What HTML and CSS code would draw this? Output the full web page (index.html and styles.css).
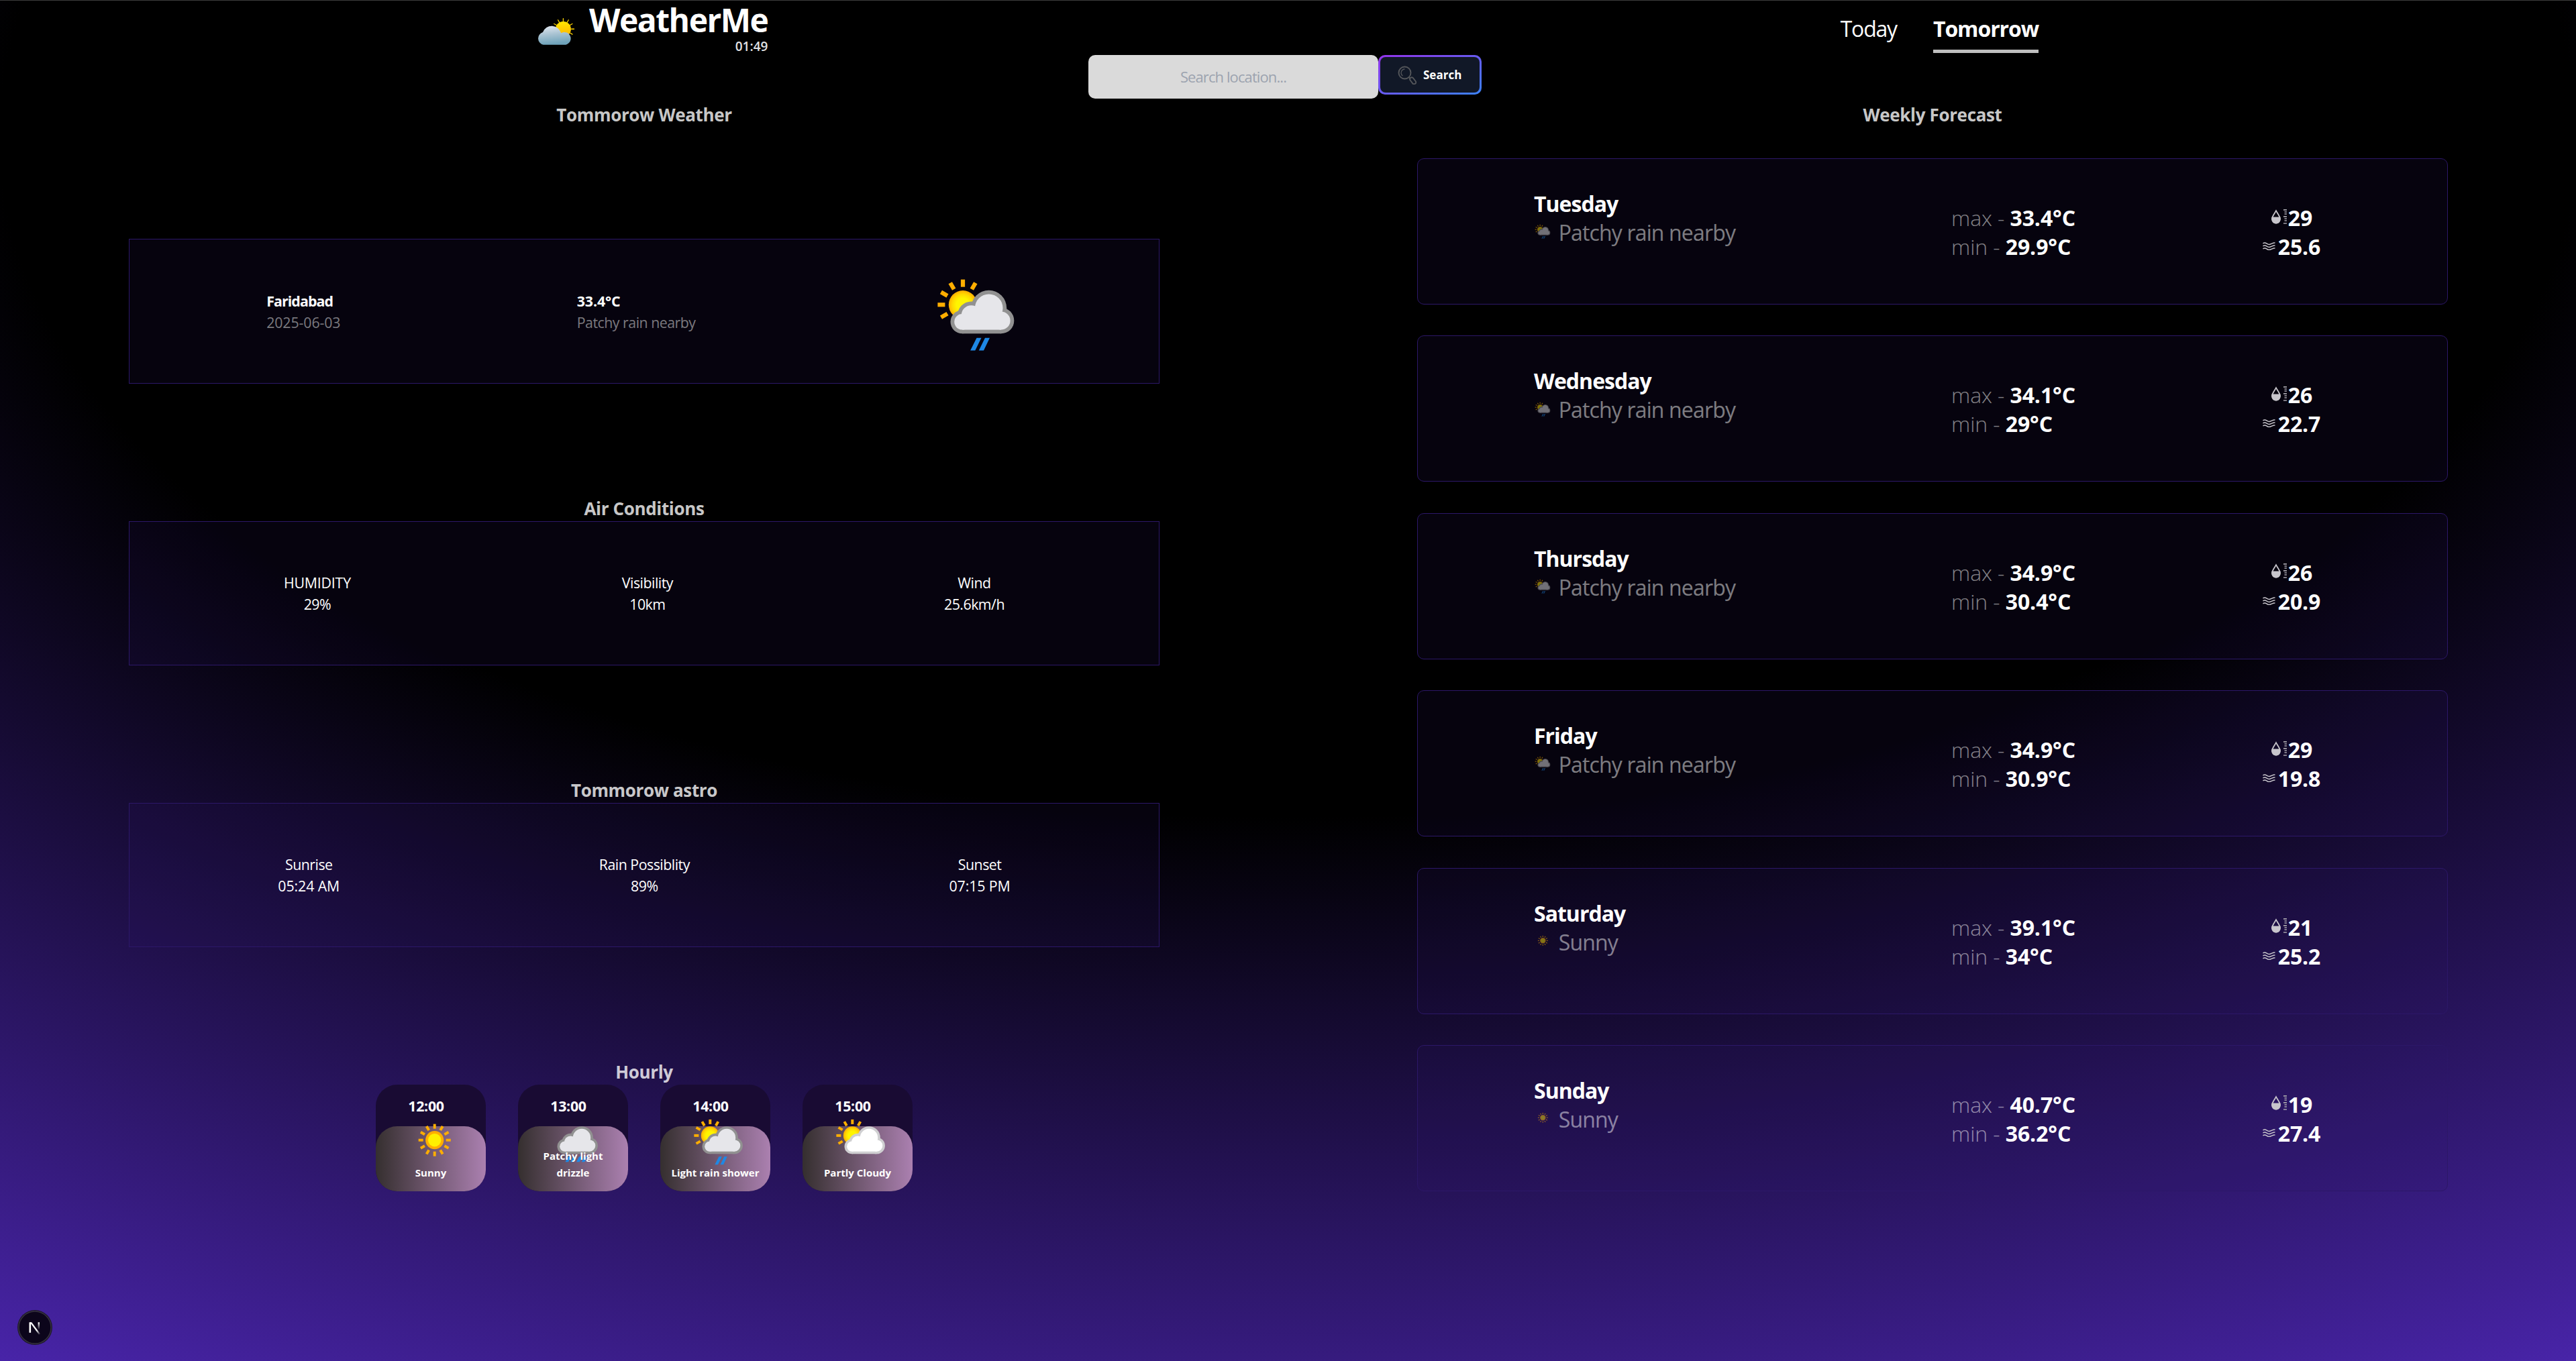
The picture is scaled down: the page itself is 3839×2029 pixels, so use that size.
FILE: index.html
```html
<!DOCTYPE html>
<html lang="en">
<head>
<meta charset="utf-8">
<title>WeatherMe</title>
<link rel="stylesheet" href="styles.css">
</head>
<body>
<svg class="defs" width="0" height="0" aria-hidden="true">
  <defs>
    <radialGradient id="sunFill"><stop offset="0.45" stop-color="#fff500"/><stop offset="0.75" stop-color="#ffd800"/><stop offset="1" stop-color="#ffae00"/></radialGradient>
    <linearGradient id="logoCloud" x1="0" y1="0" x2="0.2" y2="1"><stop offset="0" stop-color="#e6ebf3"/><stop offset="0.5" stop-color="#a9c3d2"/><stop offset="1" stop-color="#6fa3ba"/></linearGradient>
    <linearGradient id="logoSun" x1="0.5" y1="0" x2="0.6" y2="1"><stop offset="0" stop-color="#ffe600"/><stop offset="1" stop-color="#ffb300"/></linearGradient>
    <linearGradient id="nFade" x1="0" y1="0" x2="0" y2="1"><stop offset="0" stop-color="#fff"/><stop offset="1" stop-color="#fff" stop-opacity="0"/></linearGradient>
    <linearGradient id="nDiag" gradientUnits="userSpaceOnUse" x1="20" y1="20" x2="34" y2="37"><stop offset="0.6" stop-color="#fff"/><stop offset="1" stop-color="#fff" stop-opacity="0"/></linearGradient>
    <symbol id="peekingSun" viewBox="0 0 134 134">
      <g fill="#ffae00">
        <rect id="ray" x="42.9" y="18.7" width="6.2" height="11"/>
        <use href="#ray" transform="rotate(30 46 56.3)"/>
        <use href="#ray" transform="rotate(-30 46 56.3)"/>
        <use href="#ray" transform="rotate(-60 46 56.3)"/>
        <use href="#ray" transform="rotate(-90 46 56.3)"/>
        <use href="#ray" transform="rotate(-120 46 56.3)"/>
      </g>
      <circle cx="46" cy="56.3" r="21.2" fill="url(#sunFill)"/>
    </symbol>
    <symbol id="cloudEdge" viewBox="0 0 134 134">
      <circle cx="84.7" cy="61.3" r="26.5"/><circle cx="103" cy="80" r="19.3"/><circle cx="45" cy="81.8" r="17.5"/><circle cx="58.5" cy="72" r="20.5"/><rect x="45" y="62" width="58" height="37.3"/>
    </symbol>
    <symbol id="cloudCore" viewBox="0 0 134 134">
      <circle cx="84.7" cy="61.3" r="20.8"/><circle cx="103" cy="80" r="13.6"/><circle cx="45" cy="81.8" r="11.8"/><circle cx="58.5" cy="72" r="14.8"/><rect x="45" y="68" width="58" height="25.6"/>
    </symbol>
    <symbol id="sunRain" viewBox="0 0 134 134">
      <use href="#peekingSun"/>
      <use href="#cloudEdge" fill="#919191"/><use href="#cloudCore" fill="#e6e6ea"/>
      <path fill="#1e88e5" d="M66.5 105.7h7L64.3 124.5h-7.2zM79 105.7h7L77 124.5h-7.2z"/>
    </symbol>
    <symbol id="partly" viewBox="0 0 134 134">
      <use href="#peekingSun"/>
      <use href="#cloudEdge" fill="#cfcfd1"/><use href="#cloudCore" fill="#fff"/>
    </symbol>
    <symbol id="drizzle" viewBox="0 0 134 134">
      <use href="#cloudEdge" fill="#919191"/><use href="#cloudCore" fill="#e6e6ea"/>
      <path fill="#1e88e5" d="M52.500 105.700h7l-6 12.300h-7.200zM64.500 105.700h7l-6 12.300h-7.200zM78.500 105.700h7l-6 12.300h-7.200zM90.500 105.700h7l-6 12.300h-7.200z"/>
    </symbol>
    <symbol id="sunny" viewBox="0 0 134 134">
      <g fill="#ffae00">
        <rect id="ray2" x="63.900" y="29.300" width="6.200" height="11"/>
        <use href="#ray2" transform="rotate(30 67 67)"/><use href="#ray2" transform="rotate(60 67 67)"/>
        <use href="#ray2" transform="rotate(90 67 67)"/><use href="#ray2" transform="rotate(120 67 67)"/>
        <use href="#ray2" transform="rotate(150 67 67)"/><use href="#ray2" transform="rotate(180 67 67)"/>
        <use href="#ray2" transform="rotate(210 67 67)"/><use href="#ray2" transform="rotate(240 67 67)"/>
        <use href="#ray2" transform="rotate(270 67 67)"/><use href="#ray2" transform="rotate(300 67 67)"/>
        <use href="#ray2" transform="rotate(330 67 67)"/>
        <circle cx="67" cy="67" r="21.300"/>
      </g>
      <circle cx="67" cy="67" r="15.200" fill="#fff000"/>
    </symbol>
    <symbol id="humidity" viewBox="0 0 26 24">
      <path d="M8 3.200C10 7 14 11.500 14 15.500a6 6 0 0 1-12 0C2 11.500 6 7 8 3.200z" fill="none" stroke="#c8c6cc" stroke-width="1.800"/>
      <path d="M1.600 12.500h12.800c1 6-2 10-6.400 10s-7.400-4-6.400-10z" fill="#c8c6cc"/>
      <path d="M19 1.800h5M20.500 5h3.500M20.500 8h3.500M19 11.800h5M20.500 15h3.500M20.500 18h3.500M19 22h5" stroke="#a5a3aa" stroke-width="1.700"/>
    </symbol>
    <symbol id="wind" viewBox="0 0 19 13">
      <path d="M.5 3c4-3.500 6 2.200 9.500 1.500S15.500 1.500 18.500 2M.5 7c4-3.500 6 2.200 9.500 1.500S15.500 5.500 18.500 6M.5 11c4-3.500 6 2.200 9.500 1.500S15.500 9.500 18.500 10" fill="none" stroke="#c8c6cc" stroke-width="1.500"/>
    </symbol>
  </defs>
</svg>

<div class="page">
  <header class="header">
    <div class="brand">
      <svg class="logo" viewBox="0 0 55 39">
        <g stroke="#ffd500" stroke-width="1.300" stroke-linecap="round">
          <path d="M38.700.5v4M31 2.600l2 3.500M46.400 2.600l-2 3.500M52 8.200l-3.500 2M50.700 15.800h4M52 23.500l-3.500-2M25.300 8.200l3.500 2"/>
        </g>
        <circle cx="38.700" cy="16" r="11.300" fill="url(#logoSun)"/>
        <path d="M9.500 39A9.500 9.500 0 0 1 8.800 20.600 14 14 0 0 1 35.500 21.800 9.300 9.300 0 1 1 40 39z" fill="url(#logoCloud)"/>
      </svg>
      <div class="brand-text">
        <h1 class="brand-name">WeatherMe</h1>
        <div class="clock">01:49</div>
      </div>
    </div>
    <nav class="nav">
      <a class="nav-link">Today</a>
      <a class="nav-link active">Tomorrow</a>
    </nav>
  </header>

  <form class="search">
    <input class="search-input" type="text" placeholder="Search location...">
    <button class="search-button" type="button">
      <span class="search-inner">
        <svg class="search-icon" viewBox="0 0 28 28" fill="none" stroke="#54565a">
          <circle cx="10.500" cy="10.500" r="9" stroke-width="1.900"/>
          <path d="M10.500 5a5.500 5.500 0 0 0-3 10" stroke-width="1.300"/>
          <path d="M16.500 17l2 2" stroke-width="2"/>
          <rect x="-2.500" y="-5.500" width="5.400" height="11" rx="2.600" transform="translate(22.500 22.500) rotate(-38)" stroke-width="1.900"/>
        </svg>
        Search
      </span>
    </button>
  </form>

  <main class="main">
    <section class="column">
      <h2 class="heading">Tommorow Weather</h2>
      <div class="panel panel-first">
        <div>
          <p class="strong">Faridabad</p>
          <p class="muted digits">2025-06-03</p>
        </div>
        <div>
          <p class="strong digits">33.4°C</p>
          <p class="muted">Patchy rain nearby</p>
        </div>
        <svg class="icon-large"><use href="#sunRain"/></svg>
      </div>

      <h2 class="heading heading-gap">Air Conditions</h2>
      <div class="panel centered">
        <div><p class="caps">HUMIDITY</p><p>29%</p></div>
        <div><p>Visibility</p><p>10km</p></div>
        <div><p>Wind</p><p>25.6km/h</p></div>
      </div>

      <h2 class="heading heading-gap">Tommorow astro</h2>
      <div class="panel centered">
        <div><p>Sunrise</p><p class="digits">05:24 AM</p></div>
        <div><p>Rain Possiblity</p><p>89%</p></div>
        <div><p>Sunset</p><p class="digits">07:15 PM</p></div>
      </div>

      <h2 class="heading heading-gap">Hourly</h2>
      <div class="hours">
        <div class="hour"><div class="hour-time">12:00</div><svg class="hour-icon"><use href="#sunny"/></svg><div class="hour-text"><span>Sunny</span></div></div>
        <div class="hour"><div class="hour-time">13:00</div><svg class="hour-icon hour-icon-wide"><use href="#drizzle"/></svg><div class="hour-text"><span>Patchy light drizzle</span></div></div>
        <div class="hour"><div class="hour-time">14:00</div><svg class="hour-icon"><use href="#sunRain"/></svg><div class="hour-text"><span>Light rain shower</span></div></div>
        <div class="hour"><div class="hour-time">15:00</div><svg class="hour-icon"><use href="#partly"/></svg><div class="hour-text"><span>Partly Cloudy</span></div></div>
      </div>
    </section>

    <section class="column">
      <h2 class="heading">Weekly Forecast</h2>
      <div class="week">
        <article class="day">
          <div class="day-info"><h3>Tuesday</h3><p class="day-text"><svg><use href="#sunRain"/></svg>Patchy rain nearby</p></div>
          <div class="day-temps"><p><span class="label">max - </span><b>33.4°C</b></p><p><span class="label">min - </span><b>29.9°C</b></p></div>
          <div class="day-side"><p><svg class="drop"><use href="#humidity"/></svg><b>29</b></p><p><svg class="waves"><use href="#wind"/></svg><b>25.6</b></p></div>
        </article>
        <article class="day">
          <div class="day-info"><h3>Wednesday</h3><p class="day-text"><svg><use href="#sunRain"/></svg>Patchy rain nearby</p></div>
          <div class="day-temps"><p><span class="label">max - </span><b>34.1°C</b></p><p><span class="label">min - </span><b>29°C</b></p></div>
          <div class="day-side"><p><svg class="drop"><use href="#humidity"/></svg><b>26</b></p><p><svg class="waves"><use href="#wind"/></svg><b>22.7</b></p></div>
        </article>
        <article class="day">
          <div class="day-info"><h3>Thursday</h3><p class="day-text"><svg><use href="#sunRain"/></svg>Patchy rain nearby</p></div>
          <div class="day-temps"><p><span class="label">max - </span><b>34.9°C</b></p><p><span class="label">min - </span><b>30.4°C</b></p></div>
          <div class="day-side"><p><svg class="drop"><use href="#humidity"/></svg><b>26</b></p><p><svg class="waves"><use href="#wind"/></svg><b>20.9</b></p></div>
        </article>
        <article class="day">
          <div class="day-info"><h3>Friday</h3><p class="day-text"><svg><use href="#sunRain"/></svg>Patchy rain nearby</p></div>
          <div class="day-temps"><p><span class="label">max - </span><b>34.9°C</b></p><p><span class="label">min - </span><b>30.9°C</b></p></div>
          <div class="day-side"><p><svg class="drop"><use href="#humidity"/></svg><b>29</b></p><p><svg class="waves"><use href="#wind"/></svg><b>19.8</b></p></div>
        </article>
        <article class="day">
          <div class="day-info"><h3>Saturday</h3><p class="day-text"><svg><use href="#sunny"/></svg>Sunny</p></div>
          <div class="day-temps"><p><span class="label">max - </span><b>39.1°C</b></p><p><span class="label">min - </span><b>34°C</b></p></div>
          <div class="day-side"><p><svg class="drop"><use href="#humidity"/></svg><b>21</b></p><p><svg class="waves"><use href="#wind"/></svg><b>25.2</b></p></div>
        </article>
        <article class="day">
          <div class="day-info"><h3>Sunday</h3><p class="day-text"><svg><use href="#sunny"/></svg>Sunny</p></div>
          <div class="day-temps"><p><span class="label">max - </span><b>40.7°C</b></p><p><span class="label">min - </span><b>36.2°C</b></p></div>
          <div class="day-side"><p><svg class="drop"><use href="#humidity"/></svg><b>19</b></p><p><svg class="waves"><use href="#wind"/></svg><b>27.4</b></p></div>
        </article>
      </div>
    </section>
  </main>
</div>

<svg class="dev-badge" viewBox="0 0 52 52">
  <circle cx="26" cy="26" r="26" fill="#1f1a2a"/>
  <circle cx="26" cy="26" r="24" fill="#0c051b" stroke="#35303f" stroke-width="1.500"/>
  <rect x="17.500" y="18.300" width="2.600" height="15.500" fill="#fff"/>
  <path d="M18.500 18.300h2.700L34 35.500l-2 1.300z" fill="url(#nDiag)"/>
  <rect x="30.600" y="18.300" width="2.400" height="11" fill="url(#nFade)"/>
</svg>
</body>
</html>
```
FILE: styles.css
```css
* { box-sizing: border-box; }

body {
  margin: 0;
  background: #000;
  color: #fff;
  font-family: "Open Sans", "Noto Sans", sans-serif;
  font-size: 21.33px;
  line-height: 32px;
}

h1, h2, h3, p { margin: 0; }
.defs { position: absolute; }

.page {
  height: 2029px;
  border-top: 1px solid #3c3c3c;
  background: radial-gradient(125% 125% at 50% 10%, #000 40%, #63e 100%);
}

/* Header */
.header {
  display: flex;
  justify-content: space-between;
  height: 81px;
  padding: 0 801px 0 800px;
}

.brand { display: flex; gap: 22px; }
.logo { width: 56px; height: 40px; margin-top: 26px; }
.brand-text { text-align: right; }
.brand-name { font-size: 48px; line-height: 58px; letter-spacing: -1.5px; font-weight: 700; }
.clock { margin-top: -2px; font-size: 19px; line-height: 24px; font-weight: 600; color: #e2e2e4; }

.nav { display: flex; gap: 54px; }
.nav-link { height: 78px; padding-top: 20px; font-size: 32px; line-height: 44px; letter-spacing: -1.2px; }
.nav-link.active { font-weight: 700; letter-spacing: -1.1px; border-bottom: 5px solid #bfbfbf; }

/* Search */
.search { display: flex; align-items: flex-start; padding-left: 1622px; height: 65px; }

.search-input {
  width: 432px;
  height: 65px;
  padding: 0 0 2px;
  border: 0;
  border-radius: 10px;
  background: #dadada;
  font: 22px "Open Sans", sans-serif;
  letter-spacing: -0.9px;
  text-align: center;
}
.search-input::placeholder { color: #9ca3af; opacity: 1; }

.search-button {
  width: 154px;
  height: 59px;
  padding: 3px;
  border: 0;
  border-radius: 10px;
  background: linear-gradient(to bottom right, #9333ea, #3b82f6);
}

.search-inner {
  display: flex;
  align-items: center;
  gap: 10px;
  height: 100%;
  padding-left: 26px;
  border-radius: 8px;
  background: #111827;
  color: #fff;
  font: 700 17px "Open Sans", sans-serif;
}
.search-icon { width: 28px; height: 28px; }

/* Columns */
.main { display: grid; grid-template-columns: 1920px 1919px; padding-top: 6px; }
.column { padding: 0 192px; }
.column + .column { padding-right: 191px; }

.heading {
  font-size: 26px;
  line-height: 36px;
  letter-spacing: -0.35px;
  text-align: center;
  color: rgba(255, 255, 255, 0.8);
}
.heading-gap { margin-top: 168px; margin-bottom: 1px; }

.panel {
  display: flex;
  align-items: center;
  justify-content: space-around;
  height: 215px;
  padding: 1px 28px 0;
  border: 1px solid #2c1768;
  background: rgba(48, 20, 110, 0.13);
  letter-spacing: -0.5px;
}
.panel-first { height: 216px; margin-top: 167px; }
.panel.centered { text-align: center; }
.strong { font-weight: 700; letter-spacing: -0.9px; }
.muted { color: rgba(255, 255, 255, 0.48); }
.digits { letter-spacing: -0.1px; }
.caps { letter-spacing: -0.2px; }
.icon-large { width: 134px; height: 134px; }

/* Hourly cards */
.hours { display: flex; justify-content: center; gap: 48px; }

.hour {
  position: relative;
  display: flex;
  flex-direction: column;
  justify-content: space-between;
  width: 164px;
  height: 159px;
  border-radius: 32px;
  background: #190b33;
  font-weight: 700;
  text-align: center;
}
.hour-time { padding: 16px 14px 0 0; letter-spacing: -0.3px; }
.hour-icon { position: absolute; left: 45px; top: 40px; width: 85.400px; height: 85.400px; }
.hour-icon-wide { left: 41px; }

.hour-text {
  display: flex;
  align-items: flex-end;
  justify-content: center;
  height: 97px;
  padding: 0 12px 15px;
  border-radius: 32px;
  background: linear-gradient(to right, #352f2f, #ab80b0);
  font-size: 15px;
  line-height: 25px;
}
.hour-text span { position: relative; z-index: 1; }

/* Weekly forecast */
.week { display: flex; flex-direction: column; gap: 46.400px; margin-top: 47px; }

.day {
  display: grid;
  grid-template-columns: 622px 401px 212px;
  align-items: center;
  height: 218px;
  padding-left: 173px;
  border: 1px solid #2c1768;
  border-radius: 10px;
  background: rgba(48, 20, 110, 0.13);
  font-size: 32px;
  line-height: 43px;
}
.day h3 { font-size: 32px; letter-spacing: -1px; }
.day b { letter-spacing: -0.1px; }
.day-info { align-self: start; padding-top: 45px; }
.day-temps, .day-side { padding-top: 2px; }
.day-text { display: flex; align-items: center; gap: 10px; letter-spacing: -0.85px; opacity: 0.48; }
.day-text svg { width: 26.700px; height: 26.700px; margin-bottom: 4px; }
.label { font-weight: 300; letter-spacing: -0.1px; color: rgba(255, 255, 255, 0.5); }
.day-side p { display: flex; align-items: center; justify-content: center; }
.drop { width: 26px; height: 24px; margin-bottom: 4px; }
.waves { width: 19px; height: 13px; margin: 0 4px 2px 0; }

/* Dev tools badge */
.dev-badge { position: fixed; left: 26px; top: 1953px; width: 52px; height: 52px; }
```
